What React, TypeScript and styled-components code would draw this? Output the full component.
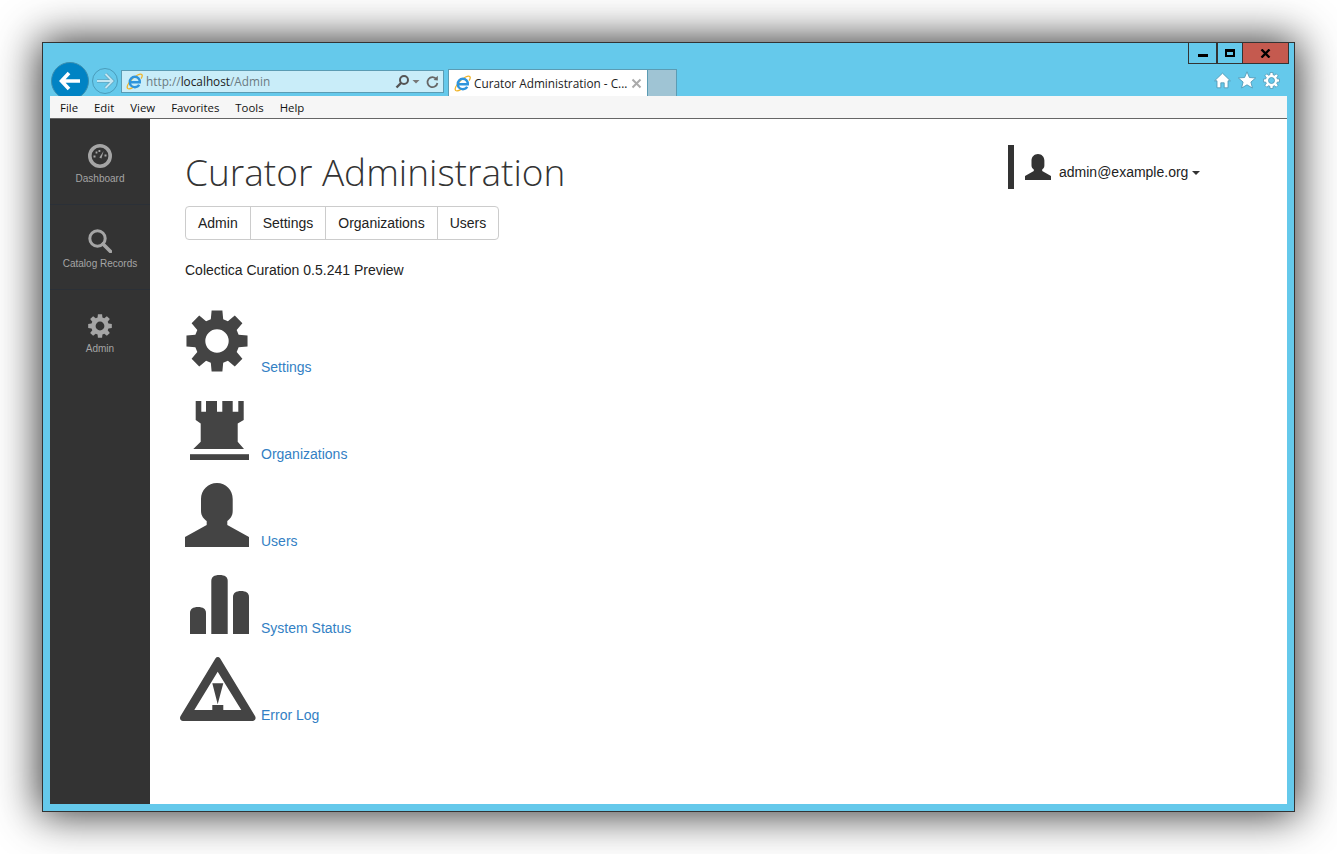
import React from 'react';
import styled, { createGlobalStyle } from 'styled-components';

const GlobalStyle = createGlobalStyle`
  html, body {
    background: #fff;
    height: 854px;
    margin: 0;
    overflow: hidden;
  }
`;

const Page = styled.div`
  box-sizing: border-box;
  height: 854px;
  padding: 42px 42px 0;
  width: 1337px;
`;

const Window = styled.div`
  background: #65c9eb;
  border: 1px solid #333;
  box-shadow: 0 0 40px 3px rgba(0, 0, 0, 0.8);
  box-sizing: border-box;
  display: flex;
  flex-direction: column;
  height: 770px;
  padding: 0 7px 7px;
  width: 1253px;
`;

const Caption = styled.div`
  display: flex;
  height: 21px;
  justify-content: flex-end;
  margin-right: -2px;
`;

const CaptionButton = styled.div<{ $width: number; $close?: boolean }>`
  align-items: center;
  background: ${p => (p.$close ? '#c55a4f' : 'transparent')};
  border: 1px solid #333;
  border-left-width: ${p => (p.$close ? 0 : 1)}px;
  border-top: 0;
  box-sizing: border-box;
  display: flex;
  justify-content: center;
  width: ${p => p.$width}px;
`;

const MinGlyph = styled.span`
  background: #000;
  display: block;
  height: 3px;
  margin-top: 5px;
  width: 10px;
`;

const MaxGlyph = styled.span`
  border: 2px solid #000;
  border-top-width: 3px;
  box-sizing: border-box;
  display: block;
  height: 8px;
  width: 10px;
`;

const NavRow = styled.div`
  align-items: flex-start;
  display: flex;
  height: 34px;
  margin-top: -2px;
  padding-left: 1px;
`;

const BackButton = styled.div`
  align-items: center;
  background: #0083c4;
  border: 1px solid #3c8fb0;
  border-radius: 50%;
  box-sizing: border-box;
  display: flex;
  flex: none;
  height: 38px;
  justify-content: center;
  width: 38px;
`;

const ForwardButton = styled.div`
  align-items: center;
  border: 1px solid #4a9cbb;
  border-radius: 50%;
  box-sizing: border-box;
  display: flex;
  flex: none;
  height: 26px;
  justify-content: center;
  margin: 6px 0 0 3px;
  width: 26px;
`;

const AddressBar = styled.div`
  align-items: center;
  background: #c9edf9;
  border: 1px solid #5b9cb4;
  box-sizing: border-box;
  display: flex;
  flex: none;
  font: 11.8px 'Open Sans', sans-serif;
  height: 23px;
  margin: 8px 0 0 3px;
  padding: 0 3px 0 4px;
  width: 323px;
`;

const UrlText = styled.span`
  color: #6b7b82;
  flex: 1;
  margin: -1px 0 0 3px;

  b {
    color: #222;
    font-weight: 400;
  }
`;

const Tab = styled.div`
  align-items: center;
  background: #fff;
  border: 1px solid #5b9cb4;
  border-bottom: 0;
  box-sizing: border-box;
  color: #222;
  display: flex;
  flex: none;
  font: 11.8px 'Open Sans', sans-serif;
  height: 27px;
  margin: 7px 0 0 4px;
  padding: 0 5px 0 5px;
  width: 200px;
`;

const TabTitle = styled.span`
  flex: 1;
  margin-left: 3px;
  white-space: nowrap;
`;

const NewTab = styled.div`
  background: #9fc4d4;
  border: 1px solid #5b9cb4;
  border-bottom: 0;
  border-left: 0;
  box-sizing: border-box;
  flex: none;
  height: 27px;
  margin-top: 7px;
  width: 29px;
`;

const ToolIcons = styled.div`
  align-items: center;
  display: flex;
  gap: 7px;
  margin: 9px 7px 0 auto;
`;

const MenuBar = styled.div`
  align-items: center;
  background: #f6f6f6;
  border-bottom: 1px solid #666;
  box-sizing: border-box;
  color: #111;
  display: flex;
  flex: none;
  font: 11.4px 'Open Sans', sans-serif;
  gap: 16px;
  height: 23px;
  padding-left: 10px;
  position: relative;
`;

const Client = styled.div`
  background: #fff;
  display: flex;
  flex: 1;
  min-height: 0;
`;

const Sidebar = styled.div`
  background: #333;
  box-sizing: border-box;
  flex: none;
  padding-top: 1px;
  width: 100px;
`;

const SideItem = styled.div<{ $last?: boolean }>`
  align-items: center;
  border-bottom: 1px solid ${p => (p.$last ? 'transparent' : '#2b3037')};
  box-sizing: border-box;
  color: #a5a5a5;
  display: flex;
  flex-direction: column;
  font: 10px/12px 'Liberation Sans', Arial, sans-serif;
  gap: 5px;
  height: 85px;
  padding-top: 24px;
`;

const Main = styled.div`
  color: #222;
  display: flex;
  flex: 1;
  font: 14px/20px 'Liberation Sans', Arial, sans-serif;
`;

const Column = styled.div`
  padding: 33px 0 0 35px;
`;

const Title = styled.h1`
  color: #333;
  font: 300 37px/40px 'Open Sans', sans-serif;
  margin: 0 0 14px;
`;

const ButtonGroup = styled.div`
  border: 1px solid #ccc;
  border-radius: 4px;
  box-sizing: border-box;
  display: inline-flex;
  height: 34px;
`;

const GroupButton = styled.div`
  align-items: center;
  border-left: 1px solid #ccc;
  display: flex;
  padding: 0 12px;

  &:first-child {
    border-left: 0;
  }
`;

const Version = styled.p`
  margin: 20px 0 6px;
`;

const LinkRow = styled.div`
  align-items: flex-end;
  display: flex;
  gap: 5px;
  height: 87px;
  margin-left: -5px;
`;

const BigIcon = styled.svg`
  display: block;
  fill: #444;
  flex: none;
  height: 64px;
  width: 76px;
`;

const RowLink = styled.a`
  color: #337fc4;
  line-height: 14px;
  margin-bottom: -1px;
  text-decoration: none;
`;

const UserBlock = styled.div`
  align-items: flex-start;
  border-left: 6px solid #333;
  box-sizing: border-box;
  display: flex;
  gap: 8px;
  height: 44px;
  margin: 26px 87px 0 auto;
  padding-left: 11px;
  width: 192px;
`;

const UserIcon = styled.svg`
  fill: #333;
  flex: none;
  height: 26px;
  margin-top: 9px;
  width: 26px;
`;

const UserName = styled.span`
  margin-top: 17px;
  white-space: nowrap;
`;

const Caret = styled.span`
  border-left: 4px solid transparent;
  border-right: 4px solid transparent;
  border-top: 4px solid #333;
  display: inline-block;
  margin-left: 4px;
  vertical-align: middle;
`;

// toothed gear, centre (cx, cy), with a round hole
const gearPath = (cx: number, cy: number, outer: number, root: number, hole: number) => {
  const at = (r: number, deg: number) => {
    const a = (deg * Math.PI) / 180;
    return `${(cx + r * Math.sin(a)).toFixed(2)} ${(cy - r * Math.cos(a)).toFixed(2)}`;
  };
  let d = '';
  for (let i = 0; i < 8; i++) {
    const c = i * 45;
    d += `${i ? 'L' : 'M'}${at(root, c - 16)} L${at(outer, c - 10)} L${at(outer, c + 10)} L${at(root, c + 16)} `;
  }
  d += `Z M${cx - hole} ${cy} a${hole} ${hole} 0 1 0 ${hole * 2} 0 a${hole} ${hole} 0 1 0 ${-hole * 2} 0 Z`;
  return d;
};

const USER_PATH =
  'M32 0C41 0 47.7 7 47.7 16V28C47.7 33 45 36 42.3 38V42L64 54V64H0V54L21.7 42V38C19 36 16 33 16 28V16C16 7 23 0 32 0Z';

const IeLogo = () => (
  <svg width="17" height="17" viewBox="0 0 17 17" style={{ flex: 'none' }}>
    <path d="M1.6 15.4C-0.2 13.2 5 5 11.6 2C14 1 16 0.8 16.2 2.4C16.3 3.4 15.6 4.8 15 5.6M1.6 15.4C2.6 16.4 4.8 15.8 7 14.4" fill="none" stroke="#f0b429" strokeWidth="1.3" />
    <path d="M3.6 9.2H13.8C14 6 11.8 3.8 8.8 3.8C5.9 3.8 3.8 6.2 3.8 9C3.8 12 6 14.2 8.9 14.2C10.8 14.2 12.4 13.4 13.2 11.8" fill="none" stroke="#2f94dc" strokeWidth="2.4" />
  </svg>
);

const HomeIcon = () => (
  <svg width="17" height="17" viewBox="0 0 17 17">
    <path d="M8.5 1.2L16.4 8.8H14V15.8H10.2V10.8H6.8V15.8H3V8.8H0.6Z" fill="#fff" stroke="#4d93b0" strokeWidth="0.8" />
  </svg>
);

const StarIcon = () => (
  <svg width="18" height="18" viewBox="0 0 18 18">
    <path d="M9 0.8L11.4 6.5L17.6 7L12.9 11L14.4 17L9 13.8L3.6 17L5.1 11L0.4 7L6.6 6.5Z" fill="#fff" stroke="#4d93b0" strokeWidth="0.8" />
  </svg>
);

const ToolsGear = () => (
  <svg width="17" height="17" viewBox="0 0 17 17">
    <path d={gearPath(8.5, 8.5, 8.2, 6, 3)} fill="#fff" fillRule="evenodd" stroke="#4d93b0" strokeWidth="0.8" />
  </svg>
);

const MENU = ['File', 'Edit', 'View', 'Favorites', 'Tools', 'Help'];
const TABS = ['Admin', 'Settings', 'Organizations', 'Users'];

const LINKS: { label: string; art: React.ReactNode }[] = [
  {
    label: 'Settings',
    art: <path fillRule="evenodd" d={gearPath(37, 32, 31, 22.5, 11.7)} />,
  },
  {
    label: 'Organizations',
    art: (
      <g transform="translate(10 5)">
        <path d="M5.7 0H11.3V10.7H16V0H27V10.7H32.3V0H42.7V10.7H48.3V0H53.7V19L47.7 22.5V40.7L54 48H3.3L10.7 40.7V22.5L5.7 19Z" />
        <rect x="0" y="53.2" width="59" height="5.8" />
      </g>
    ),
  },
  {
    label: 'Users',
    art: <path transform="translate(5 0)" d={USER_PATH} />,
  },
  {
    label: 'System Status',
    art: (
      <g transform="translate(10 5)">
        <path d="M0 59V38C0 34 3 32 8 32C13 32 16 34 16 38V59Z" />
        <path d="M21.3 59V6C21.3 2 24 0 29.5 0C35 0 37.7 2 37.7 6V59Z" />
        <path d="M43 59V22C43 18 46 16 51 16C56 16 59 18 59 22V59Z" />
      </g>
    ),
  },
  {
    label: 'Error Log',
    art: (
      <path
        fillRule="evenodd"
        d="M35.4 1.4C36.8 -0.4 38.8 -0.4 40.2 1.4L75 59C76.4 61.4 75.2 64 72.4 64H3C0.4 64 -0.8 61.4 0.6 59ZM37.7 14.7L14.3 53H32.3V48H43.3V53H61.3ZM32.3 26.3H43.3L37.7 47.3Z"
      />
    ),
  },
];

export default function App() {
  return (
    <Page>
      <GlobalStyle />
      <Window>
        <Caption>
          <CaptionButton $width={29}><MinGlyph /></CaptionButton>
          <CaptionButton $width={26}><MaxGlyph /></CaptionButton>
          <CaptionButton $width={46} $close>
            <svg width="11" height="9" viewBox="0 0 11 9">
              <path d="M1.5 0.5L9.5 8.5M9.5 0.5L1.5 8.5" stroke="#000" strokeWidth="2.4" />
            </svg>
          </CaptionButton>
        </Caption>
        <NavRow>
          <BackButton>
            <svg width="22" height="20" viewBox="0 0 22 20">
              <path d="M10 2L2.5 10L10 18M3 10H21" fill="none" stroke="#fff" strokeWidth="3.6" />
            </svg>
          </BackButton>
          <ForwardButton>
            <svg width="20" height="18" viewBox="0 0 20 18">
              <path d="M10.5 2L17.5 9L10.5 16M17 9H2" fill="none" stroke="#5fa7c2" strokeWidth="3.4" />
              <path d="M10.5 2L17.5 9L10.5 16M17 9H2" fill="none" stroke="#c4e6f1" strokeWidth="1.8" />
            </svg>
          </ForwardButton>
          <AddressBar>
            <IeLogo />
            <UrlText>http://<b>localhost</b>/Admin</UrlText>
            <svg width="15" height="15" viewBox="0 0 15 15">
              <circle cx="9" cy="6" r="4" fill="none" stroke="#555" strokeWidth="2" />
              <path d="M6 9L1.5 13.5" stroke="#555" strokeWidth="2.4" />
            </svg>
            <svg width="12" height="15" viewBox="0 0 12 15">
              <path d="M2.5 6H9.5L6 9.5Z" fill="#777" />
            </svg>
            <svg width="15" height="15" viewBox="0 0 15 15" style={{ marginLeft: 3 }}>
              <path d="M11.5 5.2A5 5 0 1 0 12.4 9" fill="none" stroke="#666" strokeWidth="1.8" />
              <path d="M8.6 6L12.8 6.4L12.8 1.8Z" fill="#666" />
            </svg>
          </AddressBar>
          <Tab>
            <IeLogo />
            <TabTitle>Curator Administration - C...</TabTitle>
            <svg width="11" height="11" viewBox="0 0 11 11">
              <path d="M1.5 1.5L9.5 9.5M9.5 1.5L1.5 9.5" stroke="#aaa" strokeWidth="2" />
            </svg>
          </Tab>
          <NewTab />
          <ToolIcons>
            <HomeIcon />
            <StarIcon />
            <ToolsGear />
          </ToolIcons>
        </NavRow>
        <MenuBar>
          {MENU.map(m => <span key={m}>{m}</span>)}
        </MenuBar>
        <Client>
          <Sidebar>
            <SideItem>
              <svg width="24" height="24" viewBox="0 0 24 24">
                <circle cx="12" cy="12" r="10.2" fill="none" stroke="#a5a5a5" strokeWidth="3.6" />
                <path d="M11.4 13.6L15.6 7L13.4 14.6Z" fill="#a5a5a5" />
                <path d="M5.5 12.5h2M7.6 8.5h1.8M11.4 6v2M16.5 11.5h2" stroke="#a5a5a5" strokeWidth="1.8" />
              </svg>
              Dashboard
            </SideItem>
            <SideItem>
              <svg width="24" height="24" viewBox="0 0 24 24">
                <circle cx="9.5" cy="9.5" r="7.7" fill="none" stroke="#a5a5a5" strokeWidth="3" />
                <path d="M15 15L22.5 22.5" stroke="#a5a5a5" strokeWidth="3.6" strokeLinecap="round" />
              </svg>
              Catalog Records
            </SideItem>
            <SideItem $last>
              <svg width="24" height="24" viewBox="0 0 24 24">
                <path d={gearPath(12, 12, 12, 8.8, 4.4)} fill="#a5a5a5" fillRule="evenodd" />
              </svg>
              Admin
            </SideItem>
          </Sidebar>
          <Main>
            <Column>
              <Title>Curator Administration</Title>
              <ButtonGroup>
                {TABS.map(t => <GroupButton key={t}>{t}</GroupButton>)}
              </ButtonGroup>
              <Version>Colectica Curation 0.5.241 Preview</Version>
              {LINKS.map(l => (
                <LinkRow key={l.label}>
                  <BigIcon viewBox="0 0 76 64">{l.art}</BigIcon>
                  <RowLink href="#">{l.label}</RowLink>
                </LinkRow>
              ))}
            </Column>
            <UserBlock>
              <UserIcon viewBox="0 0 64 64"><path d={USER_PATH} /></UserIcon>
              <UserName>admin@example.org<Caret /></UserName>
            </UserBlock>
          </Main>
        </Client>
      </Window>
    </Page>
  );
}
